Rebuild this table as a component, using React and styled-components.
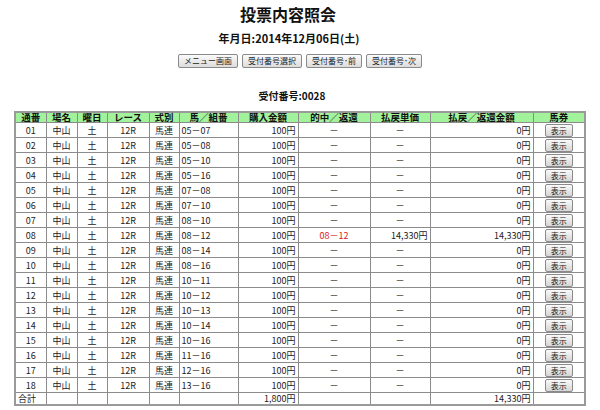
import React from "react";
import styled, { createGlobalStyle } from "styled-components";

const GlobalStyle = createGlobalStyle`
  body {
    margin: 0;
    background: #fff;
    font-family: "Noto Sans CJK JP", "Liberation Sans", sans-serif;
    color: #111;
  }
`;

const rows = [
  ["01", "05－07"],
  ["02", "05－08"],
  ["03", "05－10"],
  ["04", "05－16"],
  ["05", "07－08"],
  ["06", "07－10"],
  ["07", "08－10"],
  ["08", "08－12", true],
  ["09", "08－14"],
  ["10", "08－16"],
  ["11", "10－11"],
  ["12", "10－12"],
  ["13", "10－13"],
  ["14", "10－14"],
  ["15", "10－16"],
  ["16", "11－16"],
  ["17", "12－16"],
  ["18", "13－16"],
];

const columns = [
  { label: "通番", width: 31 },
  { label: "場名", width: 31 },
  { label: "曜日", width: 30 },
  { label: "レース", width: 42 },
  { label: "式別", width: 30 },
  { label: "馬／組番", width: 59 },
  { label: "購入金額", width: 60 },
  { label: "的中／返還", width: 72 },
  { label: "払戻単価", width: 60 },
  { label: "払戻／返還金額", width: 103 },
  { label: "馬券", width: 52 },
];

function App() {
  return (
    <Page>
      <GlobalStyle />
      <Title>投票内容照会</Title>
      <DateLine>年月日:2014年12月06日(土)</DateLine>
      <NavBar>
        <NavButton>メニュー画面</NavButton>
        <NavButton>受付番号選択</NavButton>
        <NavButton>受付番号･前</NavButton>
        <NavButton>受付番号･次</NavButton>
      </NavBar>
      <Receipt>受付番号:0028</Receipt>
      <Table>
        <colgroup>
          {columns.map((c) => (
            <col key={c.label} style={{ width: c.width }} />
          ))}
        </colgroup>
        <thead>
          <tr>
            {columns.map((c) => (
              <Th key={c.label}>{c.label}</Th>
            ))}
          </tr>
        </thead>
        <tbody>
          {rows.map(([no, combo, hit]) => (
            <Row key={no}>
              <Td>{no}</Td>
              <Td>中山</Td>
              <Td>土</Td>
              <Td>12R</Td>
              <Td>馬連</Td>
              <Td align="left">{combo}</Td>
              <Td align="right">100円</Td>
              <Td hit={hit ? 1 : 0}>{hit ? combo : "－"}</Td>
              <Td align={hit ? "right" : "center"}>{hit ? "14,330円" : "－"}</Td>
              <Td align="right">{hit ? "14,330円" : "0円"}</Td>
              <Td>
                <ShowButton>表示</ShowButton>
              </Td>
            </Row>
          ))}
          <TotalRow>
            <Td align="left">合計</Td>
            <Td />
            <Td />
            <Td />
            <Td />
            <Td />
            <Td align="right">1,800円</Td>
            <Td />
            <Td />
            <Td align="right">14,330円</Td>
            <Td />
          </TotalRow>
        </tbody>
      </Table>
    </Page>
  );
}

export default App;

const Page = styled.div`
  width: 600px;
  height: 410px;
  display: flex;
  flex-direction: column;
  align-items: center;
  overflow: hidden;
`;

const Title = styled.h1`
  margin: 3px 0 0 -24px;
  font-size: 16px;
  line-height: 22px;
  font-weight: bold;
`;

const DateLine = styled.div`
  margin: 6px 0 0 -22px;
  font-size: 11px;
  line-height: 14px;
  font-weight: bold;
`;

const NavBar = styled.div`
  display: flex;
  gap: 4px;
  margin-top: 9px;
`;

const NavButton = styled.button`
  height: 14px;
  padding: 0 5px;
  font-family: "Noto Sans CJK JP", sans-serif;
  font-size: 8px;
  line-height: 12px;
  color: #222;
  border: 1px solid #8a8a8a;
  border-radius: 2px;
  background: linear-gradient(#fafafa, #dcdcdc);
`;

const Receipt = styled.div`
  margin: 21px 0 0 -16px;
  font-size: 10px;
  line-height: 14px;
  font-weight: bold;
`;

const Table = styled.table`
  margin-top: 8px;
  width: 571px;
  table-layout: fixed;
  border-collapse: collapse;
  border: 2px solid #9a9a9a;
  font-size: 9px;
`;

const Th = styled.th`
  height: 9px;
  padding: 0;
  background: #a2f29c;
  border: 1px solid #8c8c8c;
  font-size: 9.5px;
  line-height: 9px;
  font-weight: bold;
  text-align: center;
`;

const Row = styled.tr`
  height: 15px;
`;

const TotalRow = styled.tr`
  height: 11px;
`;

const Td = styled.td`
  padding: 0 2px;
  border: 1px solid #8c8c8c;
  line-height: 11px;
  text-align: ${(p) => p.align || "center"};
  color: ${(p) => (p.hit ? "#e02020" : "#222")};
  white-space: nowrap;
  overflow: hidden;
`;

const ShowButton = styled.span`
  display: inline-block;
  width: 26px;
  height: 11px;
  line-height: 11px;
  font-size: 8px;
  color: #222;
  border: 1px solid #8a8a8a;
  border-radius: 2px;
  background: linear-gradient(#fafafa, #d6d6d6);
  vertical-align: middle;
`;
